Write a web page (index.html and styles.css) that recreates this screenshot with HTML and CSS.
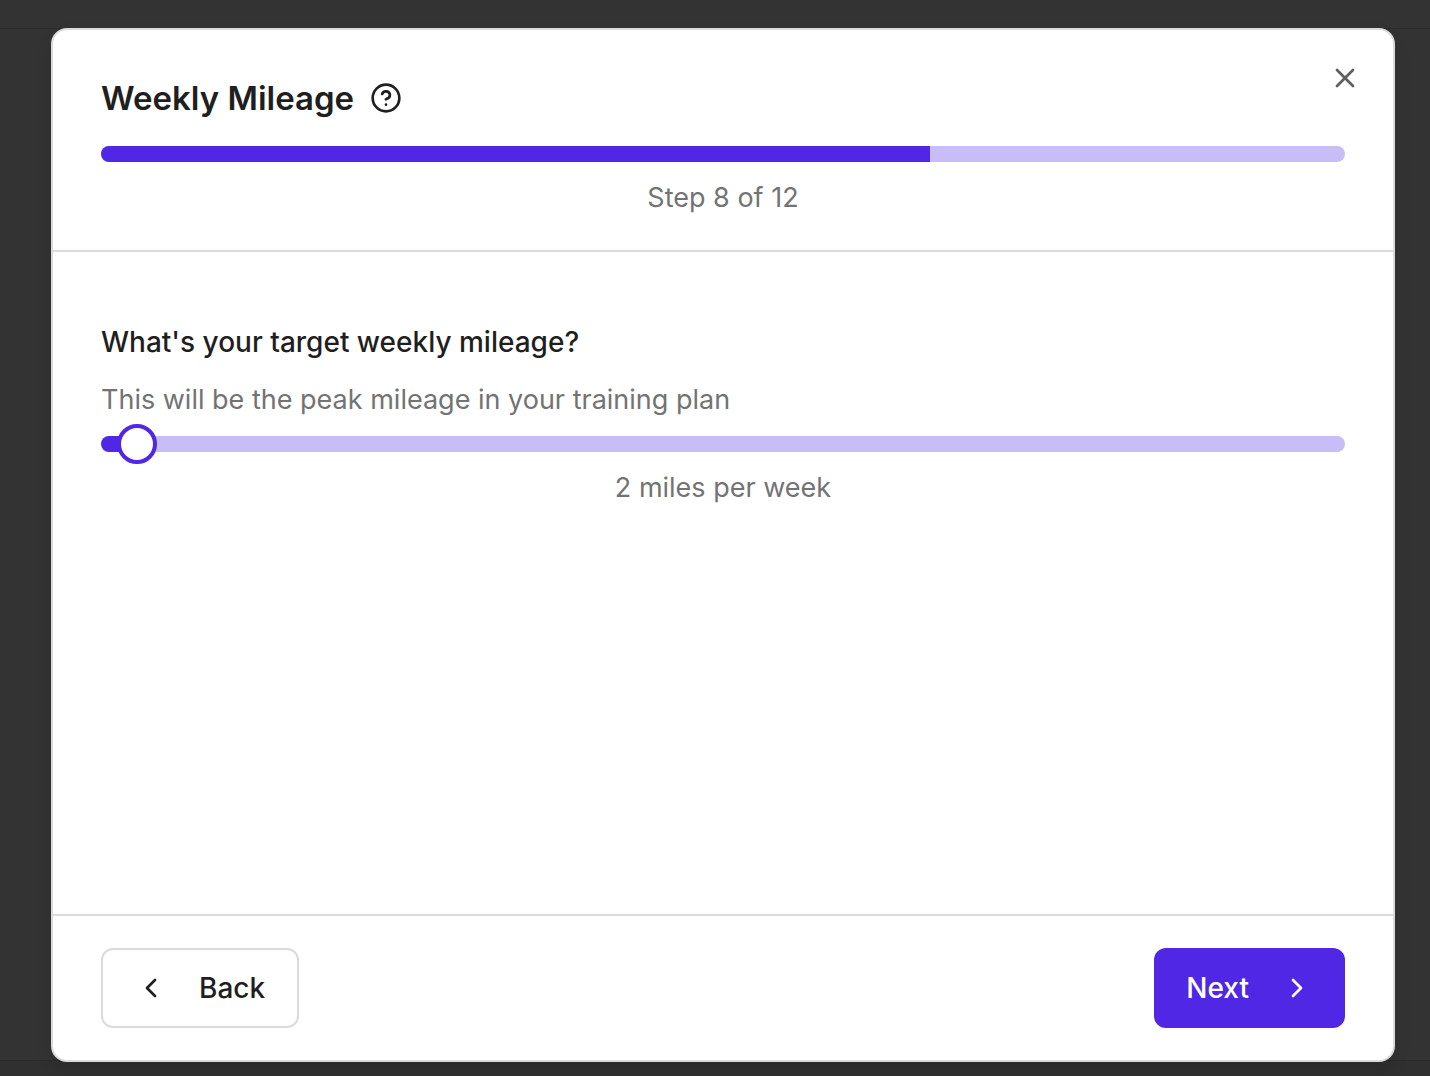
FILE: index.html
```html
<!DOCTYPE html>
<html lang="en">
<head>
<meta charset="utf-8">
<meta name="viewport" content="width=device-width, initial-scale=1">
<title>Weekly Mileage</title>
<link rel="stylesheet" href="styles.css">
</head>
<body>
<div class="backdrop">
  <div class="dialog" role="dialog" aria-labelledby="dialog-title">
    <header class="dialog-header">
      <div class="title-row">
        <h1 class="title" id="dialog-title">Weekly Mileage</h1>
        <button class="icon-button" type="button" aria-label="Help">
          <svg class="icon" viewBox="0 0 24 24" aria-hidden="true"><circle cx="12" cy="12" r="10"/><path d="M9.09 9a3 3 0 0 1 5.83 1c0 2-3 3-3 3"/><path d="M12 17h.01"/></svg>
        </button>
      </div>
      <progress class="progress" value="8" max="12" aria-label="Progress"></progress>
      <p class="caption">Step 8 of 12</p>
      <button class="icon-button close" type="button" aria-label="Close">
        <svg class="icon" viewBox="0 0 24 24" aria-hidden="true"><path d="M18 6 6 18"/><path d="m6 6 12 12"/></svg>
      </button>
    </header>
    <main class="dialog-body">
      <label class="question" for="mileage">What's your target weekly mileage?</label>
      <p class="hint" id="mileage-hint">This will be the peak mileage in your training plan</p>
      <input class="slider" id="mileage" type="range" min="0" max="150" value="2" aria-describedby="mileage-hint">
      <output class="caption" for="mileage">2 miles per week</output>
    </main>
    <footer class="dialog-footer">
      <button class="button button-outline" type="button">
        <svg class="icon" viewBox="0 0 24 24" aria-hidden="true"><path d="m15 18-6-6 6-6"/></svg>
        Back
      </button>
      <button class="button button-primary" type="button">
        Next
        <svg class="icon" viewBox="0 0 24 24" aria-hidden="true"><path d="m9 18 6-6-6-6"/></svg>
      </button>
    </footer>
  </div>
</div>
</body>
</html>
```
FILE: styles.css
```css
:root {
  --primary: #4f27e5;
  --primary-soft: #c8bdf7;
  --text: #1f1f1f;
  --muted: #737373;
  --border: #dbdbdb;
}

* {
  box-sizing: border-box;
}

body {
  margin: 0;
  background: #333333;
  color: var(--text);
  font-family: Inter, "Liberation Sans", sans-serif;
  font-size: 28px;
  line-height: 40px;
}

h1,
p {
  margin: 0;
}

.backdrop {
  display: flex;
  min-height: 100vh;
  padding: 0 35px 0 51px;
}

.backdrop::before,
.backdrop::after {
  content: "";
  position: absolute;
  left: 0;
  right: 0;
  z-index: -1;
}

.backdrop::before {
  top: 0;
  height: 28px;
  border-bottom: 1px solid #2b2b2b;
}

.backdrop::after {
  bottom: 0;
  height: 15px;
  border-top: 1px solid #2b2b2b;
  background: #303030;
}

.dialog {
  position: relative;
  flex: 1;
  display: flex;
  flex-direction: column;
  margin: 28px 0 14px;
  border: 2px solid var(--border);
  border-radius: 16px;
  background: #ffffff;
  box-shadow: 0 8px 16px rgba(0, 0, 0, 0.1);
}

.dialog-header {
  display: flex;
  flex-direction: column;
  padding: 48px 48px 32px;
  border-bottom: 2px solid var(--border);
}

.title-row {
  display: flex;
  align-items: center;
  gap: 16px;
  margin-bottom: 28px;
}

.title {
  font-size: 33px;
  font-weight: 600;
  line-height: 40px;
}

.icon {
  display: block;
  width: 32px;
  height: 32px;
  fill: none;
  stroke: currentColor;
  stroke-width: 2;
  stroke-linecap: round;
  stroke-linejoin: round;
}

.icon-button {
  padding: 0;
  border: 0;
  background: none;
  color: inherit;
}

.close {
  position: absolute;
  top: 32px;
  right: 32px;
  color: #5f5f5f;
}

.progress {
  appearance: none;
  display: block;
  width: 100%;
  height: 16px;
  margin-bottom: 16px;
  border: 0;
  border-radius: 8px;
  overflow: hidden;
}

.progress::-webkit-progress-bar {
  background: var(--primary-soft);
}

.progress::-webkit-progress-value {
  background: var(--primary);
}

.caption,
.hint {
  color: var(--muted);
  font-size: 27px;
}

.caption {
  text-align: center;
}

.dialog-body {
  flex: 1;
  display: flex;
  flex-direction: column;
  padding: 70px 48px 48px;
}

.question {
  margin-bottom: 18px;
  font-weight: 500;
}

.hint {
  margin-bottom: 4px;
}

.slider {
  appearance: none;
  width: 100%;
  height: 40px;
  margin: 0 0 4px;
  background: none;
}

.slider::-webkit-slider-runnable-track {
  height: 16px;
  border-radius: 8px;
  background: linear-gradient(to right, var(--primary) 3%, var(--primary-soft) 3%);
}

.slider::-webkit-slider-thumb {
  appearance: none;
  width: 40px;
  height: 40px;
  margin-top: -12px;
  border: 4px solid var(--primary);
  border-radius: 50%;
  background: #ffffff;
}

.dialog-footer {
  display: flex;
  justify-content: space-between;
  padding: 32px 48px;
  border-top: 2px solid var(--border);
}

.button {
  display: flex;
  align-items: center;
  gap: 32px;
  height: 80px;
  padding: 0 32px;
  border: 0;
  border-radius: 12px;
  font: inherit;
  font-weight: 500;
}

.button-outline {
  border: 2px solid var(--border);
  background: #ffffff;
  color: var(--text);
}

.button-primary {
  background: var(--primary);
  color: #ffffff;
}
```
